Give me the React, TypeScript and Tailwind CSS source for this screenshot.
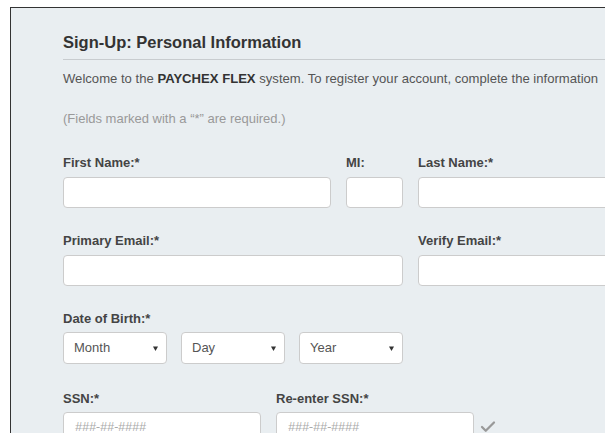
import { Check } from 'lucide-react'

function Field({ label, className }: { label: string; className: string }) {
  return (
    <div className={className}>
      <label className="block text-[13px] leading-[15px] font-bold text-[#444]">{label}</label>
      <input
        type="text"
        className="mt-[7px] block h-[31px] w-full rounded-[4px] border border-[#ccc] bg-white"
      />
    </div>
  )
}

function DateSelect({ text }: { text: string }) {
  return (
    <div className="flex h-[32px] w-[104px] items-center justify-between rounded-[4px] border border-[#ccc] bg-white pl-[10px] pr-[8px]">
      <span className="text-[13px] text-[#555]">{text}</span>
      <svg width="5" height="5" viewBox="0 0 5 5" className="mt-[1px]">
        <polygon points="0,0.5 5,0.5 2.5,5" fill="#333" />
      </svg>
    </div>
  )
}

function SsnField({ label }: { label: string }) {
  return (
    <div className="w-[198px]">
      <label className="block text-[13px] leading-[15px] font-bold text-[#444]">{label}</label>
      <div className="mt-[6px] flex h-[31px] items-center rounded-[4px] border border-[#ccc] bg-white pl-[11px]">
        <span className="text-[12.5px] italic text-[#aaa]">###-##-####</span>
      </div>
    </div>
  )
}

export default function App() {
  return (
    <div className="h-[433px] w-[605px] overflow-hidden bg-white font-['Liberation_Sans',Arial,sans-serif]">
      <div className="ml-[10px] mt-[7px] h-[600px] w-[700px] border-l border-t border-[#333] bg-[#e9eef1] pl-[52px] pt-[24px]">
        {/* Header */}
        <h2 className="text-[16.5px] leading-[20px] font-bold text-[#333]">Sign-Up: Personal Information</h2>
        <div className="mt-[7px] h-px w-full bg-[#c8cccf]" />
        <p className="mt-[11px] whitespace-nowrap text-[13.1px] leading-[16px] text-[#555]">
          Welcome to the <b className="text-[#333]">PAYCHEX FLEX</b> system. To register your account, complete the information
        </p>
        <p className="mt-[24px] text-[13px] leading-[16px] text-[#999]">(Fields marked with a “*” are required.)</p>

        {/* Name row */}
        <div className="mt-[28px] flex gap-[15px]">
          <Field label="First Name:*" className="w-[268px]" />
          <Field label="MI:" className="w-[57px]" />
          <Field label="Last Name:*" className="w-[268px]" />
        </div>

        {/* Email row */}
        <div className="mt-[25px] flex gap-[15px]">
          <Field label="Primary Email:*" className="w-[340px]" />
          <Field label="Verify Email:*" className="w-[268px]" />
        </div>

        {/* Birth date */}
        <div className="mt-[25px]">
          <label className="block text-[13px] leading-[15px] font-bold text-[#444]">Date of Birth:*</label>
          <div className="mt-[6px] flex gap-[14px]">
            <DateSelect text="Month" />
            <DateSelect text="Day" />
            <DateSelect text="Year" />
          </div>
        </div>

        {/* SSN row */}
        <div className="mt-[27px] flex gap-[15px]">
          <SsnField label="SSN:*" />
          <SsnField label="Re-enter SSN:*" />
          <Check className="-ml-[10px] mt-[27px] h-[18px] w-[18px] text-[#999]" strokeWidth={3} />
        </div>
      </div>
    </div>
  )
}
